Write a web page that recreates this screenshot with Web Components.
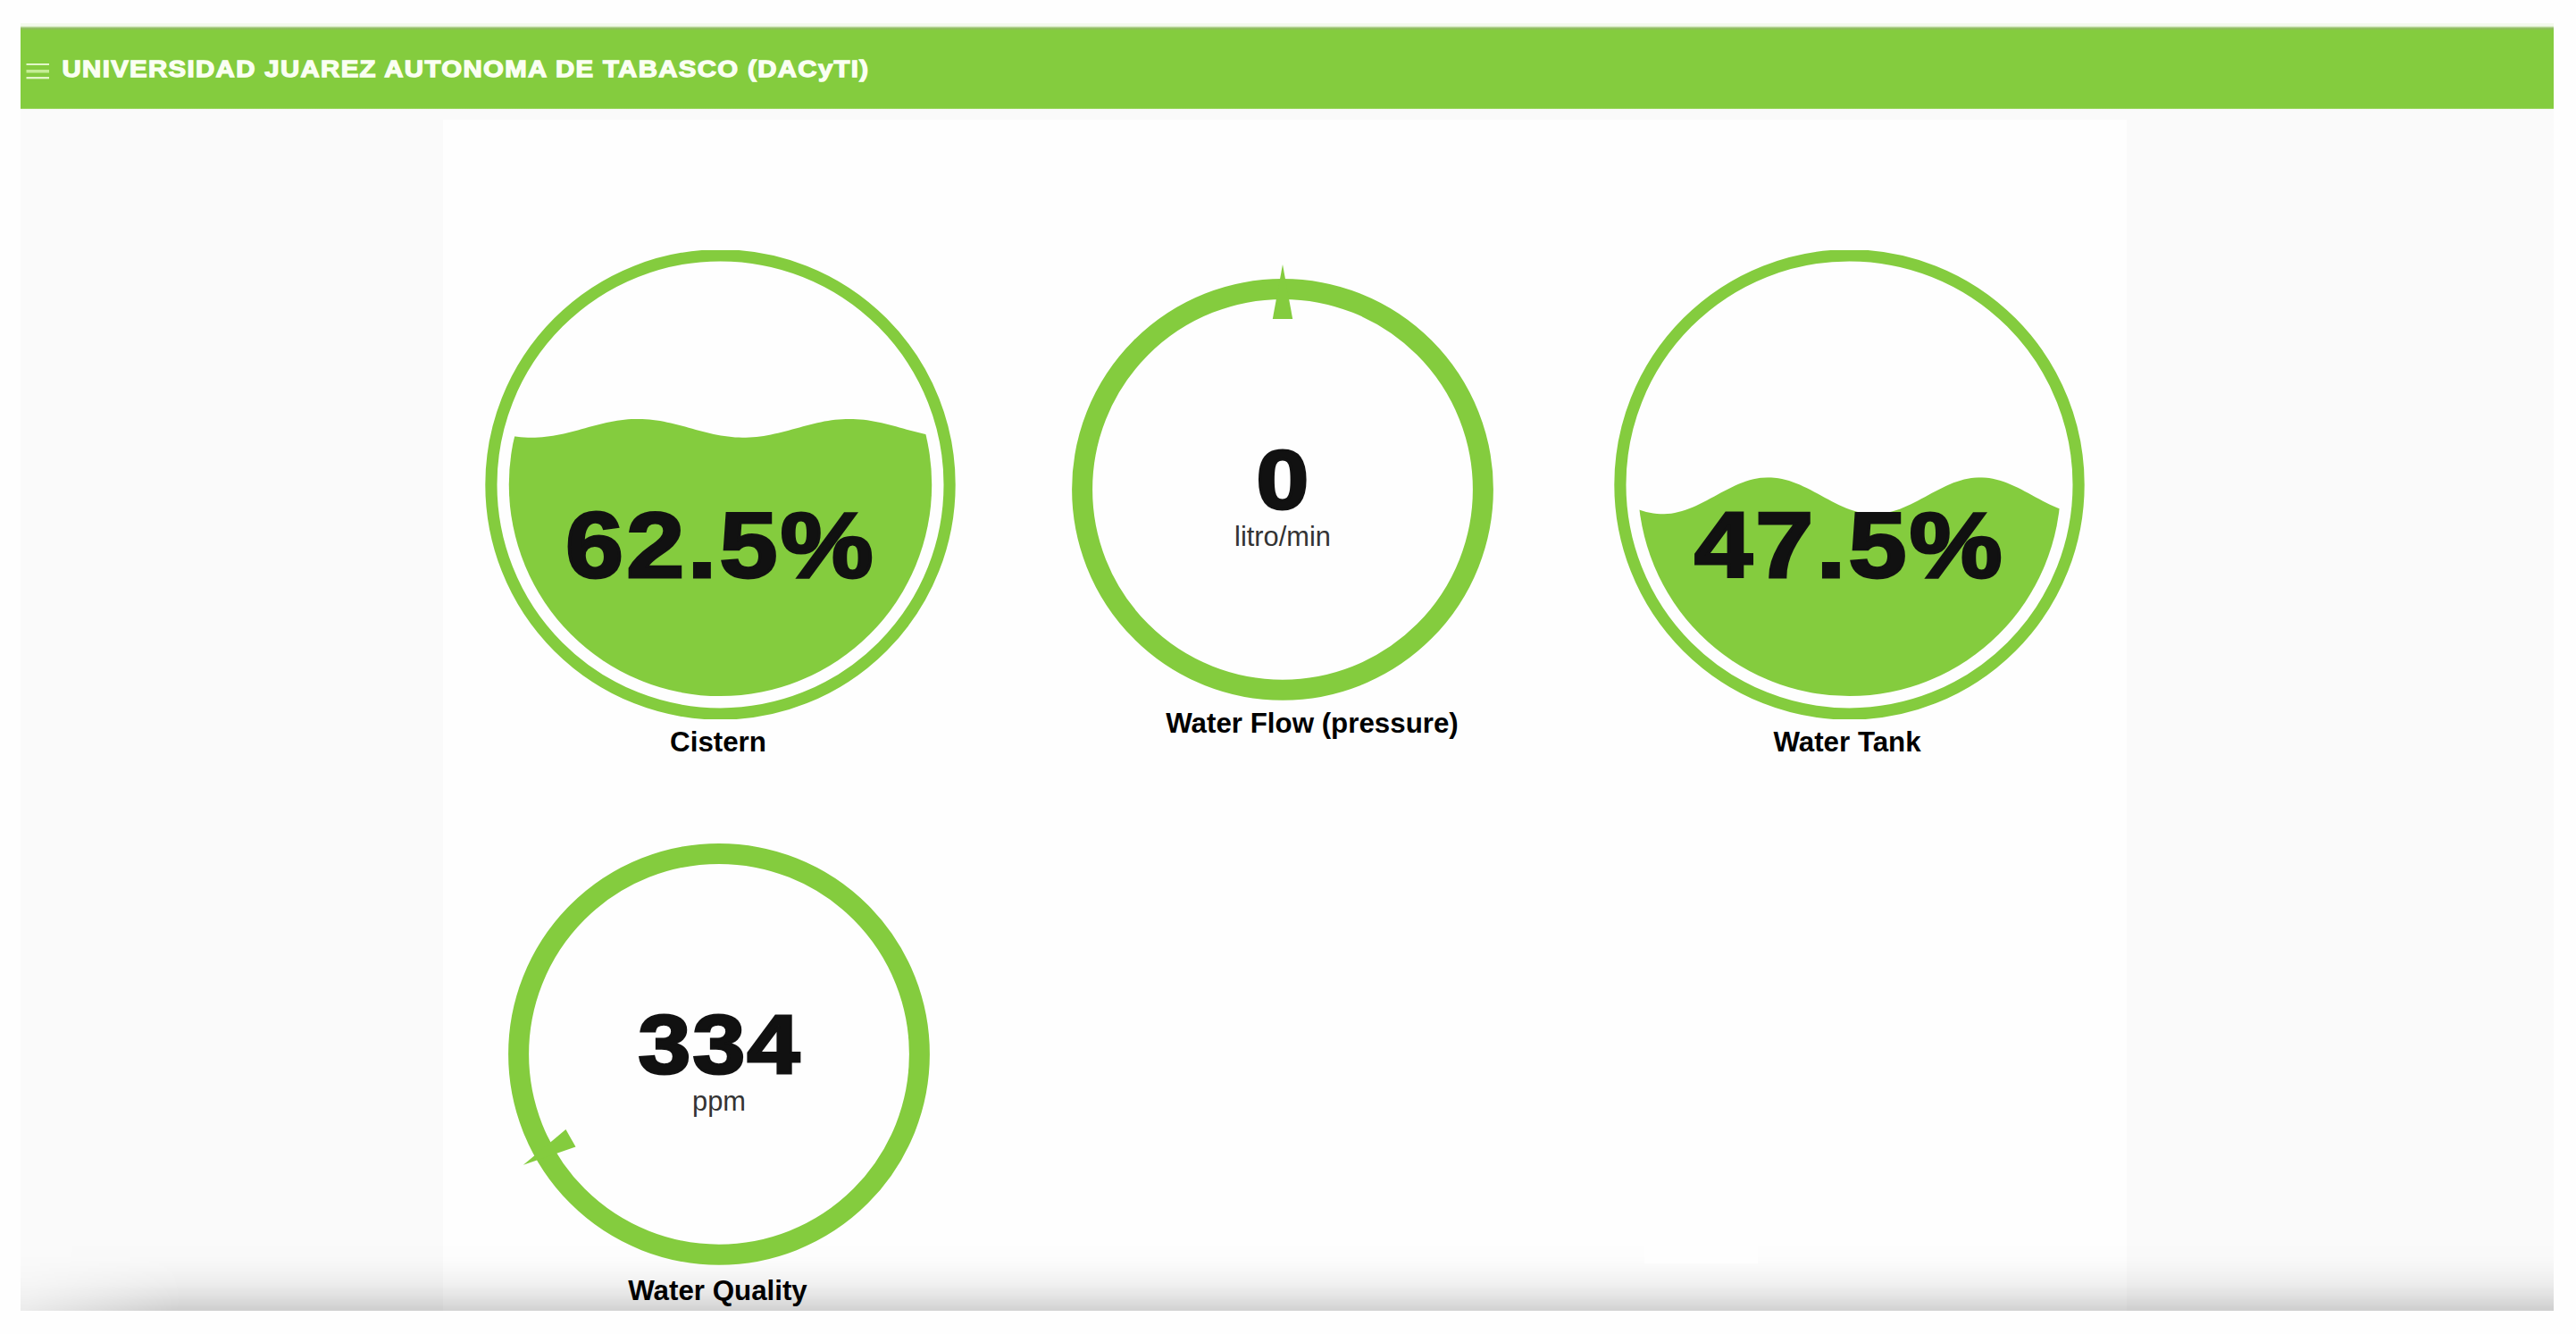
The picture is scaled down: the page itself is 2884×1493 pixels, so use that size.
<!DOCTYPE html>
<html lang="es">
<head>
<meta charset="utf-8">
<title>UJAT - DACyTI</title>
<style>
  body{
    margin:0; height:1493px; overflow:hidden;
    background:#fefefe;
    font-family:"Liberation Sans", Arial, sans-serif;
    --green:#84cc3e;
    --ink:#111;
  }
</style>
</head>
<body>
<app-page>
  <app-bar slot="bar" heading="UNIVERSIDAD JUAREZ AUTONOMA DE TABASCO (DACyTI)"></app-bar>
  <liquid-gauge value="62.5" level="200.1" amplitude="10.4" crest="170.9">Cistern</liquid-gauge>
  <needle-gauge value="0" unit="litro/min" max="500" style="margin:16px 0 0 1px; --shift:66px; --gap:7px">Water Flow (pressure)</needle-gauge>
  <liquid-gauge value="47.5" level="275.6" amplitude="20.5" crest="172.8">Water Tank</liquid-gauge>
  <needle-gauge value="334" unit="ppm" max="500" style="margin-right:3px; --shift:-3px; --gap:10px">Water Quality</needle-gauge>
</app-page>

<script>
const labelStyle = `
  .label{
    color:#000; font-weight:700; font-size:31.3px; line-height:38px;
    white-space:nowrap; text-align:center;
  }
`;

class AppPage extends HTMLElement {
  constructor() {
    super();
    this.attachShadow({ mode: "open" }).innerHTML = `
      <style>
        :host{
          display:flex; flex-direction:column;
          position:relative; box-sizing:border-box;
          width:2836px; height:1467px; margin-left:23px; padding-top:26px;
        }
        .body{ flex:1; padding:12px 0 0 473px; background:#fafafa; }
        .card{
          display:grid; box-sizing:border-box;
          grid-template-columns:621px 637px 633px; grid-template-rows:648px auto;
          align-items:start;
          width:1885px; height:1333px; padding-top:146px;
          background:#fefefe;
        }
        ::slotted(liquid-gauge), ::slotted(needle-gauge){ position:relative; z-index:1; }
        .shade{
          position:absolute; left:0; right:0; bottom:0; height:82px;
          background:linear-gradient(rgba(0,0,0,0), rgba(0,0,0,.004) 25%, rgba(0,0,0,.015) 38%, rgba(0,0,0,.05) 62%, rgba(0,0,0,.1) 80%, rgba(0,0,0,.175));
          -webkit-mask-image:linear-gradient(100deg, rgba(0,0,0,.35) 20px, #000 190px);
          mask-image:linear-gradient(100deg, rgba(0,0,0,.35) 20px, #000 190px);
        }
        .patch{
          position:absolute; left:1818px; bottom:53px; width:127px; height:24px;
          background:#fefefe;
        }
      </style>
      <slot name="bar"></slot>
      <div class="body"><div class="card"><slot></slot></div></div>
      <div class="shade"></div>
      <div class="patch"></div>
    `;
  }
}

class AppBar extends HTMLElement {
  constructor() {
    super();
    this.attachShadow({ mode: "open" }).innerHTML = `
      <style>
        :host{
          display:block; height:96px;
          background:linear-gradient(#f4faed 3px, #cfe6b6 4px, #9dc578 5px, #8fba5c 6px, var(--green) 8px, var(--green) 95px, #b5e184 96px);
        }
        svg{ display:block; }
        text{
          fill:#fafff2; stroke:#fafff2; stroke-width:1.3;
          font-weight:700; font-size:26.5px; letter-spacing:1.2px;
        }
      </style>
      <svg width="1000" height="96" viewBox="23 26 1000 96">
        <g fill="#e2f6c8">
          <rect x="29.5" y="71" width="25.5" height="2"/>
          <rect x="29.5" y="78" width="25.5" height="3.5" fill="#c5ee95"/>
          <rect x="29.5" y="86" width="25.5" height="2.3"/>
        </g>
        <text x="69.5" y="85.5" textLength="904" lengthAdjust="spacingAndGlyphs">${this.getAttribute("heading")}</text>
      </svg>
    `;
  }
}

class LiquidGauge extends HTMLElement {
  constructor() {
    super();
    this.attachShadow({ mode: "open" }).innerHTML = `
      <style>
        :host{ display:block; }
        svg{ display:block; margin:0 auto 7.5px; }
        .value{
          fill:var(--ink); stroke:var(--ink); stroke-width:3;
          font-weight:700; font-size:103px; letter-spacing:3px;
        }
        .label{ padding-right:5px; }
        ${labelStyle}
      </style>
      <svg width="527" height="524.5" viewBox="0 0.8 527 524.5">
        <circle cx="263.5" cy="263.2" r="256.6" fill="none" stroke="var(--green)" stroke-width="13.2"/>
        <clipPath id="wave"><path d="${this._wave()}"/></clipPath>
        <circle cx="263.5" cy="263.2" r="236.7" fill="var(--green)" clip-path="url(#wave)"/>
        <text class="value" x="90" y="367" textLength="348" lengthAdjust="spacingAndGlyphs">${this.getAttribute("value")}%</text>
      </svg>
      <div class="label"><slot></slot></div>
    `;
  }

  // surface is a sine with two periods across the filled disc
  _wave() {
    const level = Number(this.getAttribute("level"));
    const amplitude = Number(this.getAttribute("amplitude"));
    const crest = Number(this.getAttribute("crest"));
    let d = "M0 527";
    for (let x = 0; x <= 528; x += 4) {
      const y = level - amplitude * Math.cos(((x - crest) / 237) * 2 * Math.PI);
      d += ` L${x} ${y.toFixed(2)}`;
    }
    return d + " V527 Z";
  }
}

class NeedleGauge extends HTMLElement {
  constructor() {
    super();
    const value = this.getAttribute("value");
    const angle = (Number(value) / Number(this.getAttribute("max"))) * 360;
    const width = value.length * 61;

    this.attachShadow({ mode: "open" }).innerHTML = `
      <style>
        :host{ display:block; }
        svg{ display:block; margin:0 auto var(--gap); overflow:visible; }
        .value{
          fill:var(--ink); stroke:var(--ink); stroke-width:3;
          font-weight:700; font-size:92px; letter-spacing:2px;
        }
        .unit{ fill:#333; font-size:30.8px; text-anchor:middle; }
        .label{ padding-left:max(var(--shift), 0px); padding-right:max(calc(0px - var(--shift)), 0px); }
        ${labelStyle}
      </style>
      <svg width="504" height="488" viewBox="0 0 504 488">
        <circle cx="252" cy="251.8" r="224.4" fill="none" stroke="var(--green)" stroke-width="23"/>
        <path d="M252 0 L263.2 61 H240.8 Z" fill="var(--green)" transform="rotate(${angle} 252 251.8)"/>
        <text class="value" x="${253 - width / 2}" y="273" textLength="${width}" lengthAdjust="spacingAndGlyphs">${value}</text>
        <text class="unit" x="252" y="315">${this.getAttribute("unit")}</text>
      </svg>
      <div class="label"><slot></slot></div>
    `;
  }
}

customElements.define("app-page", AppPage);
customElements.define("app-bar", AppBar);
customElements.define("liquid-gauge", LiquidGauge);
customElements.define("needle-gauge", NeedleGauge);
</script>
</body>
</html>
